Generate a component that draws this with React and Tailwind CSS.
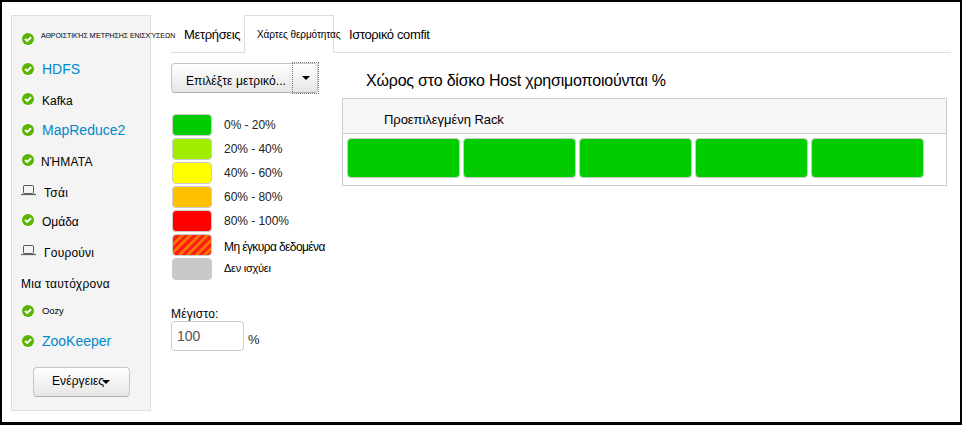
import React from "react";

const services = [
  { name: "ΑΘΡΟΙΣΤΙΚΉΣ ΜΈΤΡΗΣΗΣ ΕΝΙΣΧΎΣΕΩΝ", icon: "ok", row: "h-[30px]", text: "text-[7px] tracking-[-0.07px] pb-[7px] ml-[7px] text-black" },
  { name: "HDFS", icon: "ok", row: "h-[30px]", text: "text-sm ml-2 text-[#0088cc]" },
  { name: "Kafka", icon: "ok", row: "h-[30px]", text: "text-xs pt-[3px] ml-2 text-black" },
  { name: "MapReduce2", icon: "ok", row: "h-[31px]", text: "text-sm ml-2 text-[#0088cc]" },
  { name: "ΝΉΜΑΤΑ", icon: "ok", row: "h-[30px]", text: "text-xs tracking-[0.25px] pt-[3px] ml-[7px] text-black" },
  { name: "Τσάι", icon: "host", row: "h-[30px]", text: "text-xs tracking-[0.3px] pt-[5px] ml-[8px] text-black" },
  { name: "Ομάδα", icon: "ok", row: "h-[30px]", text: "text-xs pt-[3px] ml-2 text-black" },
  { name: "Γουρούνι", icon: "host", row: "h-[30px]", text: "text-xs tracking-[0.2px] pt-[5px] ml-[8px] text-black" },
  { name: "Μια ταυτόχρονα", icon: null, row: "h-[31px]", text: "text-xs tracking-[0.3px] -ml-px pt-[6px] text-black" },
  { name: "Oozy", icon: "ok", row: "h-[30px]", text: "text-[9.5px] tracking-[-0.1px] ml-2 text-black" },
  { name: "ZooKeeper", icon: "ok", row: "h-[30px]", text: "text-sm ml-2 text-[#0088cc]" },
];

const legend = [
  { label: "0% - 20%", swatch: "bg-[#00cc00]" },
  { label: "20% - 40%", swatch: "bg-[#9fee00]" },
  { label: "40% - 60%", swatch: "bg-[#ffff00]" },
  { label: "60% - 80%", swatch: "bg-[#ffc000]" },
  { label: "80% - 100%", swatch: "bg-[#ff0000]" },
  {
    label: "Μη έγκυρα δεδομένα",
    swatch: "bg-[repeating-linear-gradient(-45deg,#ff1e10_0px,#ff1e10_3px,#ff7300_3px,#ff7300_6px)]",
    text: "text-[12px] tracking-[-0.6px] text-black pt-[3px]",
  },
  { label: "Δεν ισχύει", swatch: "bg-[#c8c8c8]", text: "text-[11px] tracking-[-0.25px] text-black pb-px" },
];

function OkIcon() {
  return (
    <svg className="block h-3 w-3 shrink-0" viewBox="0 0 12 12">
      <circle cx="6" cy="6" r="6" fill="#5ab400" />
      <path d="M3 6 5.2 8 9.1 4.2" fill="none" stroke="#fff" strokeWidth="1.9" />
    </svg>
  );
}

function HostIcon() {
  return (
    <svg className="-ml-px block h-[11px] w-[15px] shrink-0" viewBox="0 0 15 11">
      <rect x="2.5" y="0.5" width="10" height="8" rx="0.8" fill="none" stroke="#555" />
      <path d="M0 9.5H15" stroke="#666" strokeWidth="1.3" />
    </svg>
  );
}

function Caret() {
  return <span className="block h-0 w-0 border-x-4 border-t-4 border-x-transparent border-t-black" />;
}

function Sidebar() {
  return (
    <aside className="h-[396px] w-[140px] shrink-0 border border-[#e0e0e0] bg-[#f4f4f4] pt-2">
      <ul>
        {services.map((s) => (
          <li key={s.name} className={"flex items-center pl-[10px] " + s.row}>
            {s.icon === "ok" && <OkIcon />}
            {s.icon === "host" && <HostIcon />}
            <span className={"whitespace-nowrap leading-none " + s.text}>{s.name}</span>
          </li>
        ))}
      </ul>
      <button className="ml-[21px] mt-[11px] flex h-[30px] w-[97px] items-center rounded border border-[#c5c5c5] border-b-[#b0b0b0] bg-linear-to-b from-white to-[#e6e6e6] pl-[18px] text-xs leading-none text-black">
        <span className="-mt-0.5 tracking-[0.1px]">Ενέργειες</span>
        <span className="-ml-[2px]"><Caret /></span>
      </button>
    </aside>
  );
}

function Tabs() {
  return (
    <nav className="flex h-[38px] items-stretch whitespace-nowrap leading-none text-black">
      <div className="w-[73px] border-b border-[#ddd] pl-[13px] pt-[13px] text-[13px] tracking-[-0.35px]">Μετρήσεις</div>
      <div className="w-[90px] border border-b-0 border-[#ddd] pl-[12px] pt-[14px] text-[10px] tracking-[-0.08px]">Χάρτες θερμότητας</div>
      <div className="flex-1 border-b border-[#ddd] pl-[15px] pt-[13px] text-[13px] tracking-[-0.37px]">Ιστορικό comfit</div>
    </nav>
  );
}

function MetricPanel() {
  return (
    <div className="w-[171px] shrink-0">
      <div className="mt-[10px] flex h-[30px] w-[147px] rounded border border-[#c5c5c5] border-b-[#b0b0b0] bg-linear-to-b from-white to-[#e6e6e6]">
        <div className="w-[120px] whitespace-nowrap pl-[14px] pt-[11px] text-xs leading-none tracking-[0.1px] text-black">Επιλέξτε μετρικό...</div>
        <div className="-my-[2px] -mr-[2px] flex flex-1 items-center justify-center border border-dotted border-[#777]">
          <Caret />
        </div>
      </div>
      <ul className="mt-[21px] flex flex-col gap-[2px] pl-px">
        {legend.map((l) => (
          <li key={l.label} className="flex h-[22px] items-center">
            <span className={"h-[22px] w-10 rounded border border-[#ccc] " + l.swatch} />
            <span className={"ml-3 whitespace-nowrap leading-none " + (l.text || "text-xs tracking-[-0.04px] text-[#222]")}>{l.label}</span>
          </li>
        ))}
      </ul>
      <div className="mt-[28px] text-xs leading-[13px] tracking-[0.2px] text-black">Μέγιστο:</div>
      <div className="flex">
        <div className="h-[30px] w-[73px] rounded border border-[#ccc] pl-[5px] pt-[7px] text-sm leading-none text-[#555]">100</div>
        <span className="ml-[4px] pt-[12px] text-[13px] leading-none text-[#222]">%</span>
      </div>
    </div>
  );
}

function Heatmap() {
  return (
    <section className="flex-1">
      <h2 className="mt-[20px] h-[25px] whitespace-nowrap pl-6 text-base leading-none tracking-[-0.2px] text-black">Χώρος στο δίσκο Host χρησιμοποιούνται %</h2>
      <div className="mr-[4px] h-[88px] border border-[#ccc]">
        <div className="h-[35px] border-b border-[#ccc] bg-[#f7f7f7] pl-[41px] pt-[14px] text-[13px] leading-none tracking-[-0.05px] text-black">Προεπιλεγμένη Rack</div>
        <div className="flex gap-[3px] pl-[4px] pt-[4px]">
          {[0, 1, 2, 3, 4].map((i) => (
            <div key={i} className="h-10 w-[113px] rounded border border-[#ccc] bg-[#00cc00]" />
          ))}
        </div>
      </div>
    </section>
  );
}

export default function App() {
  return (
    <div className="flex h-[425px] w-[962px] border-2 border-b-[3px] border-black bg-white pl-[9px] pt-[13px] font-['Liberation_Sans',Arial,sans-serif]">
      <Sidebar />
      <main className="ml-5 mr-[9px] flex-1">
        <Tabs />
        <div className="flex">
          <MetricPanel />
          <Heatmap />
        </div>
      </main>
    </div>
  );
}
